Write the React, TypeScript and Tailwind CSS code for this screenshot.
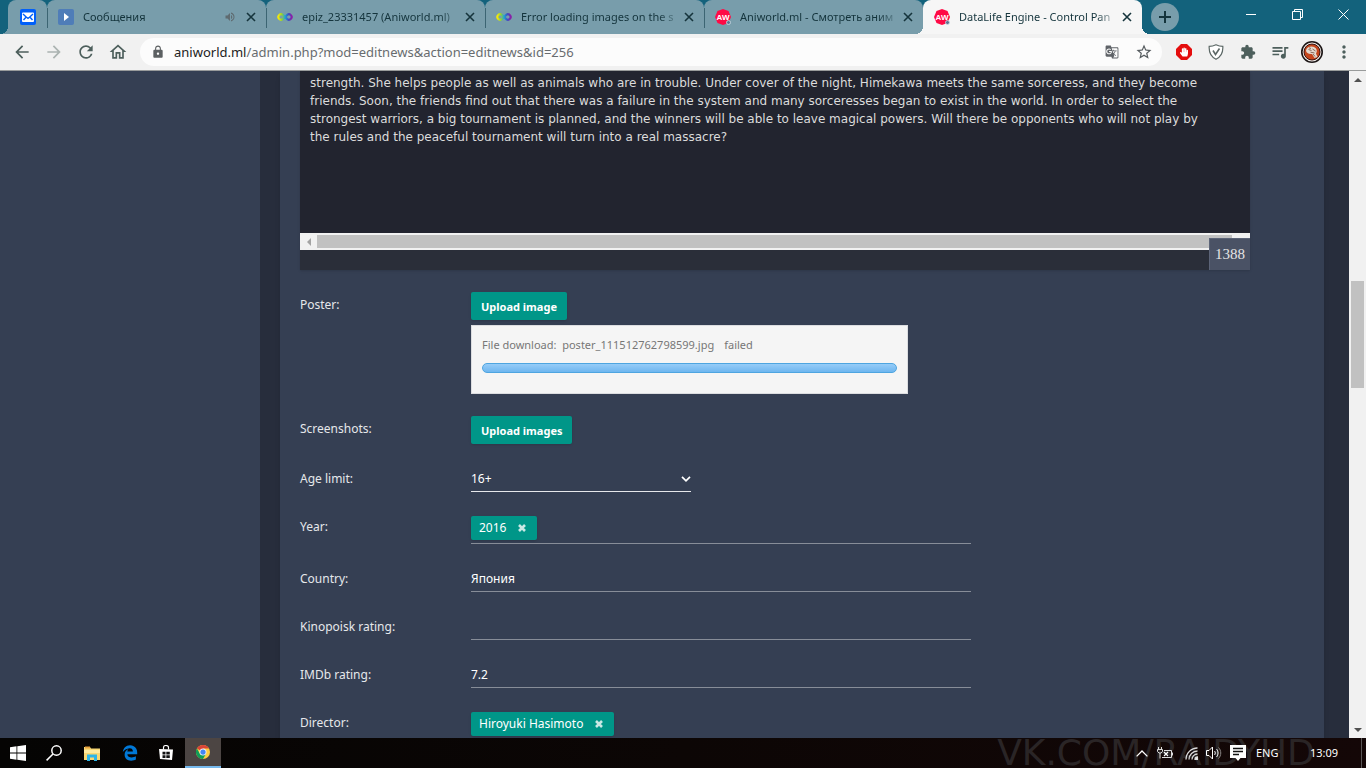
import React, { useState } from 'react';
import {
  MdArrowBack,
  MdArrowForward,
  MdExtension,
  MdGTranslate,
  MdLock,
  MdMoreVert,
  MdOutlineHome,
  MdQueueMusic,
  MdRefresh,
  MdStarBorder,
  MdVolumeUp,
} from 'react-icons/md';
import { FaEdgeLegacy, FaHandPaper } from 'react-icons/fa';

const DESCRIPTION = [
  'strength. She helps people as well as animals who are in trouble. Under cover of the night, Himekawa meets the same sorceress, and they become',
  'friends. Soon, the friends find out that there was a failure in the system and many sorceresses began to exist in the world. In order to select the',
  'strongest warriors, a big tournament is planned, and the winners will be able to leave magical powers. Will there be opponents who will not play by',
  'the rules and the peaceful tournament will turn into a real massacre?',
].join('\n');

/* ---------- logos ---------- */

function MailLogo() {
  return (
    <svg viewBox="0 0 16 16" className="w-4 h-4 shrink-0">
      <rect width="16" height="16" rx="2" fill="#005ff9" />
      <rect x="2" y="3.5" width="12" height="9.5" rx="1" fill="#fff" />
      <path d="M3 5l3.2 3L3.5 11M13 5L9.8 8l2.7 3M5.5 7.5L8 9.3l2.5-1.8" fill="none" stroke="#005ff9" strokeWidth="1.4" />
    </svg>
  );
}

function PlayLogo() {
  return (
    <svg viewBox="0 0 16 16" className="w-4 h-4 shrink-0">
      <rect width="16" height="16" rx="2" fill="#4f7db8" />
      <path d="M6 4l5 4-5 4z" fill="#fff" />
    </svg>
  );
}

function InfinityLogo({ id }: { id: string }) {
  return (
    <svg viewBox="0 0 16 16" className="w-4 h-4 shrink-0">
      <defs>
        <linearGradient id={id} x1="0" x2="1" y1="0" y2="0">
          <stop offset="0" stopColor="#f2e70c" />
          <stop offset="0.25" stopColor="#9bd42a" />
          <stop offset="0.5" stopColor="#1aa6d8" />
          <stop offset="0.75" stopColor="#3a52c4" />
          <stop offset="1" stopColor="#8a1fa8" />
        </linearGradient>
      </defs>
      <path
        d="M8 8l2.2-2.1a2.7 2.7 0 1 1 0 4.2L5.8 5.9a2.7 2.7 0 1 0 0 4.2z"
        fill="none"
        stroke={`url(#${id})`}
        strokeWidth="2.2"
      />
    </svg>
  );
}

function AwLogo() {
  return (
    <svg viewBox="0 0 16 16" className="w-4 h-4 shrink-0">
      <path d="M8 0l5.5 2L16 8l-2.5 6L8 16l-5.5-2L0 8l2.5-6z" fill="#ff0a45" />
      <text x="8" y="10.5" textAnchor="middle" fontSize="8" fontWeight="700" fontFamily="Liberation Sans, sans-serif" fill="#fff">
        AW
      </text>
      <circle cx="13.5" cy="13.5" r="2" fill="#5b7795" stroke="#cfdde4" strokeWidth="0.8" />
    </svg>
  );
}

function ShieldIcon() {
  return (
    <svg viewBox="0 0 16 16" className="w-4 h-4" fill="none" stroke="#5c6866" strokeWidth="1.2">
      <path d="M8 .8c2.5 1.2 4.5 1.6 6.8 1.6.4 5.8-1.6 10.4-6.8 12.9C2.800 12.8.8 8.2 1.2 2.4 3.5 2.4 5.5 2 8 .8z" fill="#fff" />
      <path d="M5 6.5l2.5 4L11.5 4.5" strokeWidth="1.6" />
    </svg>
  );
}

function Avatar() {
  return (
    <svg viewBox="0 0 22 22" className="w-[22px] h-[22px]">
      <circle cx="11" cy="11" r="10.2" fill="#f3efec" stroke="#1c1616" strokeWidth="1.6" />
      <circle cx="11" cy="11" r="8" fill="#c5461d" stroke="#3a1410" />
      <path d="M5 9.5c.5-3.5 5-5 8-3.5 3 1.5 3.5 4.5 2 6.5l1.5 3.5-3 1-2.5-4c-3 .5-6-1-6-3.5z" fill="#e4d9ce" />
      <path d="M7.5 8.5l3 1M11.5 8l3 2M9.5 11.2l4 .8M12 13l2 2.5M8 6.8l2 .7" stroke="#6e4a3c" strokeWidth="0.8" />
    </svg>
  );
}

function ChromeLogo() {
  return (
    <svg viewBox="0 0 16 16" className="w-[14px] h-[14px]">
      <circle cx="8" cy="8" r="8" fill="#ffcd40" />
      <path d="M8 8L1.07 4A8 8 0 0 1 14.93 4H8z" fill="#db4437" />
      <path d="M1.07 4A8 8 0 0 0 8 16l3.46-6L8 8 4.5 10z" fill="#0f9d58" />
      <circle cx="8" cy="8" r="4" fill="#f1f1f1" />
      <circle cx="8" cy="8" r="3" fill="#4285f4" />
    </svg>
  );
}

/* ---------- browser chrome ---------- */

type BrowserTab = { title: string; icon: React.ReactNode; muted?: boolean };

const TABS: BrowserTab[] = [
  { title: 'Сообщения', icon: <PlayLogo />, muted: true },
  { title: 'epiz_23331457 (Aniworld.ml)', icon: <InfinityLogo id="inf-a" /> },
  { title: 'Error loading images on the s', icon: <InfinityLogo id="inf-b" /> },
  { title: 'Aniworld.ml - Смотреть аним', icon: <AwLogo /> },
  { title: 'DataLife Engine - Control Pan', icon: <AwLogo /> },
];

function TabStrip() {
  const [active, setActive] = useState(4);
  return (
    <div className="h-[34px] flex bg-[#13627c] text-[#14343c] pl-2">
      <button aria-label="Mail" className="relative w-[39px] rounded-t-lg bg-[#789dab] flex items-center justify-center">
        <span className="absolute -left-2 bottom-0 w-2 h-2 bg-[radial-gradient(circle_at_top_left,transparent_8px,#789dab_8px)]" />
        <MailLogo />
      </button>
      {TABS.map((t, i) => (
        <div
          key={t.title}
          className={`relative w-[219px] min-w-0 flex items-center pl-[11px] pr-[7px] rounded-t-lg ${
            i === active ? 'bg-[#f6f6f6]' : 'bg-[#789dab]'
          }`}
        >
          {i !== active && <span className="absolute left-0 top-2 h-5 w-px bg-[#3c6573]" />}
          {i === active && (
            <>
              <span className="absolute -left-2 bottom-0 w-2 h-2 bg-[radial-gradient(circle_at_top_left,transparent_8px,#f6f6f6_8px)]" />
              <span className="absolute -right-2 bottom-0 w-2 h-2 bg-[radial-gradient(circle_at_top_right,transparent_8px,#f6f6f6_8px)]" />
            </>
          )}
          {t.icon}
          <button
            onClick={() => setActive(i)}
            className="ml-[9px] flex-1 min-w-0 overflow-hidden whitespace-nowrap text-left text-[11px] leading-4 [mask-image:linear-gradient(to_right,black_86%,transparent)]"
          >
            {t.title}
          </button>
          {t.muted && <MdVolumeUp className="w-3 h-3 mr-[7px] shrink-0 text-[#5f6b70]" />}
          <button aria-label="Close tab" className="w-4 h-4 shrink-0 flex items-center justify-center">
            <svg viewBox="0 0 10 10" className="w-[10px] h-[10px]" stroke="#16343c" strokeWidth="1.6">
              <path d="M1 1l8 8M9 1L1 9" />
            </svg>
          </button>
        </div>
      ))}
      <button aria-label="New tab" className="ml-[9px] mt-[3px] w-7 h-7 rounded-full bg-[#789dab] flex items-center justify-center">
        <svg viewBox="0 0 12 12" className="w-3 h-3" stroke="#14343c" strokeWidth="2">
          <path d="M6 0v12M0 6h12" />
        </svg>
      </button>
      <div className="ml-auto flex h-7">
        <button aria-label="Minimize" className="w-[46px] flex items-center justify-center">
          <span className="w-[10px] h-px bg-white" />
        </button>
        <button aria-label="Restore" className="w-[46px] flex items-center justify-center">
          <svg viewBox="0 0 11 11" className="w-[11px] h-[11px]" fill="none" stroke="#fff">
            <path d="M.5 2.5h8v8h-8zM2.5 2.5v-2h8v8h-2" />
          </svg>
        </button>
        <button aria-label="Close" className="w-[46px] flex items-center justify-center">
          <svg viewBox="0 0 11 11" className="w-[11px] h-[11px]" stroke="#fff">
            <path d="M.5.5l10 10M10.5.5l-10 10" />
          </svg>
        </button>
      </div>
    </div>
  );
}

function ToolbarButton({ label, children }: { label: string; children: React.ReactNode }) {
  return (
    <button aria-label={label} className="w-8 h-7 flex items-center justify-center">
      {children}
    </button>
  );
}

function Toolbar() {
  return (
    <div className="h-[37px] flex items-center bg-[#f1f1f1] border-b border-[#999b9b] text-[#4d5f5c] px-[6px]">
      <div className="flex">
        <ToolbarButton label="Back"><MdArrowBack className="w-5 h-5" /></ToolbarButton>
        <ToolbarButton label="Forward"><MdArrowForward className="w-5 h-5 text-[#abb3b1]" /></ToolbarButton>
        <ToolbarButton label="Reload"><MdRefresh className="w-5 h-5" /></ToolbarButton>
        <ToolbarButton label="Home"><MdOutlineHome className="w-5 h-5" /></ToolbarButton>
      </div>
      <div className="mx-[6px] flex-1 h-7 rounded-full bg-[#fcfcfc] flex items-center pl-[11px] pr-[9px]">
        <MdLock className="w-[14px] h-[14px] text-[#5c6062]" />
        <div className="relative ml-[9px] flex-1">
          <input
            aria-label="Address"
            readOnly
            value="aniworld.ml/admin.php?mod=editnews&action=editnews&id=256"
            className="block w-full bg-transparent text-[13px] leading-5 text-[#686c6f] outline-none"
          />
          {/* host part sits over the field in the darker tone */}
          <span aria-hidden className="absolute left-0 top-0 bg-[#fcfcfc] text-[13px] leading-5 text-[#222] pointer-events-none">
            aniworld.ml
          </span>
        </div>
        <MdGTranslate className="w-[14px] h-[14px] text-[#5f6368]" />
        <MdStarBorder className="ml-4 w-[18px] h-[18px] text-[#555b5e]" />
      </div>
      <div className="flex">
        <ToolbarButton label="AdBlock">
          <span className="relative block w-4 h-4">
            <svg viewBox="0 0 16 16" className="w-4 h-4">
              <path d="M5 0h6l5 5v6l-5 5H5l-5-5V5z" fill="#e40d0d" />
            </svg>
            <FaHandPaper className="absolute left-1 top-[3px] w-2 h-[10px] text-white" />
          </span>
        </ToolbarButton>
        <ToolbarButton label="Protection"><ShieldIcon /></ToolbarButton>
        <ToolbarButton label="Extensions"><MdExtension className="w-4 h-4" /></ToolbarButton>
        <ToolbarButton label="Media"><MdQueueMusic className="w-5 h-5" /></ToolbarButton>
        <ToolbarButton label="Profile"><Avatar /></ToolbarButton>
        <ToolbarButton label="Menu"><MdMoreVert className="w-5 h-5" /></ToolbarButton>
      </div>
    </div>
  );
}

function PageScrollbar() {
  return (
    <div className="w-[17px] shrink-0 bg-[#f1f1f1] flex flex-col items-center">
      <div className="h-[17px] flex items-center">
        <span className="border-x-4 border-b-4 border-x-transparent border-b-[#505050]" />
      </div>
      <div className="flex-1 w-full px-[2px] pt-[193px]">
        <div className="h-[107px] bg-[#c1c1c1]" />
      </div>
      <div className="h-[17px] flex items-center">
        <span className="border-x-4 border-t-4 border-x-transparent border-t-[#505050]" />
      </div>
    </div>
  );
}

/* ---------- form ---------- */

function Row({ label, htmlFor, children }: { label: string; htmlFor: string; children: React.ReactNode }) {
  return (
    <div className="flex items-start">
      <label htmlFor={htmlFor} className="w-[171px] shrink-0 leading-[26px] text-[#e6e8eb]">
        {label}
      </label>
      <div className="flex-1 min-w-0">{children}</div>
    </div>
  );
}

function TextField({ id, value }: { id: string; value?: string }) {
  return (
    <input
      id={id}
      defaultValue={value}
      className="block w-full max-w-[500px] h-[26px] bg-transparent border-b border-[#878d98] text-white outline-none"
    />
  );
}

function TagField({ id, tags }: { id: string; tags: string[] }) {
  const [items, setItems] = useState(tags);
  return (
    <div className="flex w-full max-w-[500px] h-[30px] pt-[2px] border-b border-[#878d98]">
      {items.map((tag) => (
        <span key={tag} className="h-6 flex shrink-0 items-center gap-2 px-2 rounded-xs bg-[#009688] text-white leading-[26px] shadow">
          {tag}
          <button
            type="button"
            aria-label={`Remove ${tag}`}
            onClick={() => setItems(items.filter((x) => x !== tag))}
            className="w-[15px] flex justify-center"
          >
            <svg viewBox="0 0 8 8" className="w-2 h-2" stroke="#c9e8e5" strokeWidth="2.6">
              <path d="M1 1l6 6M7 1L1 7" />
            </svg>
          </button>
        </span>
      ))}
      <input id={id} className="flex-1 min-w-0 bg-transparent outline-none" />
    </div>
  );
}

function UploadButton({ id, children }: { id: string; children: React.ReactNode }) {
  return (
    <button
      id={id}
      type="button"
      className="block h-7 px-[10px] pt-[2px] rounded-xs bg-[#009688] text-white text-[11px] font-bold shadow"
    >
      {children}
    </button>
  );
}

function Editor() {
  return (
    <div className="relative bg-[#2a2e39] shadow">
      <textarea
        aria-label="Description"
        defaultValue={DESCRIPTION}
        className="block w-full h-[162px] px-[10px] pt-[3px] bg-[#22242f] text-[#dcdcdc] text-[12px] leading-[18px] whitespace-pre resize-none overflow-hidden outline-none font-['DejaVu_Sans',sans-serif]"
      />
      <div className="h-[17px] flex items-center bg-[#f1f1f1]">
        <div className="w-[17px] flex justify-center">
          <span className="border-y-4 border-r-4 border-y-transparent border-r-[#a3a3a3]" />
        </div>
        <div className="flex-1 h-[13px] mr-[18px] bg-[#c1c1c1]" />
      </div>
      <div className="h-5" />
      <div className="absolute right-0 bottom-0 h-8 px-[5px] flex items-center bg-[#4a5265] border-l border-t border-[#5c6478] text-[#e4e4e4] text-[15px] font-['Liberation_Serif',serif]">
        1388
      </div>
    </div>
  );
}

function NewsForm() {
  return (
    <form className="w-full max-w-[990px] px-5 flex flex-col gap-[22px] text-[12px]">
      <Editor />
      <Row label="Poster:" htmlFor="poster">
        <UploadButton id="poster">Upload image</UploadButton>
        <div className="mt-[5px] max-w-[437px] h-[69px] px-[10px] pt-[10px] bg-[#f5f5f5] border border-[#dcdde0] text-[#777]">
          <div className="flex gap-[10px] text-[11px] leading-[18px] whitespace-pre">
            <span>File download:  poster_111512762798599.jpg</span>
            <span>failed</span>
          </div>
          <div
            role="progressbar"
            aria-label="Upload progress"
            aria-valuenow={100}
            className="mt-[9px] h-[10px] rounded-full border border-[#4ea5e0] bg-linear-to-b from-[#96ccf8] to-[#6eb6ef]"
          />
        </div>
      </Row>
      <Row label="Screenshots:" htmlFor="screens">
        <UploadButton id="screens">Upload images</UploadButton>
      </Row>
      <Row label="Age limit:" htmlFor="age">
        <div className="relative w-[220px]">
          <select
            id="age"
            defaultValue="16+"
            className="block w-full h-[26px] appearance-none bg-transparent border-b border-[#e6e8eb] text-white outline-none"
          >
            <option>12+</option>
            <option>16+</option>
            <option>18+</option>
          </select>
          <svg viewBox="0 0 10 6" className="absolute right-0 top-[10px] w-[10px] h-[6px] pointer-events-none" fill="none" stroke="#fff" strokeWidth="1.7">
            <path d="M1 .8l4 4 4-4" />
          </svg>
        </div>
      </Row>
      <Row label="Year:" htmlFor="year">
        <TagField id="year" tags={['2016']} />
      </Row>
      <Row label="Country:" htmlFor="country">
        <TextField id="country" value="Япония" />
      </Row>
      <Row label="Kinopoisk rating:" htmlFor="kinopoisk">
        <TextField id="kinopoisk" />
      </Row>
      <Row label="IMDb rating:" htmlFor="imdb">
        <TextField id="imdb" value="7.2" />
      </Row>
      <Row label="Director:" htmlFor="director">
        <TagField id="director" tags={['Hiroyuki Hasimoto']} />
      </Row>
    </form>
  );
}

/* ---------- taskbar ---------- */

function Taskbar() {
  return (
    <footer className="relative h-[30px] shrink-0 flex items-center overflow-hidden bg-linear-to-r from-[#050403] via-[#0c0605] to-[#140707] text-white">
      {/* wallpaper lettering showing through */}
      <span
        aria-hidden
        className="absolute left-[73%] bottom-[-5px] text-[36px] leading-10 text-[#2a2526] whitespace-nowrap font-['DejaVu_Sans',sans-serif]"
      >
        VK.COM/RAIDYHD
      </span>
      <button aria-label="Start" className="w-9 flex justify-center">
        <svg viewBox="0 0 16 16" className="w-4 h-4" fill="#fff">
          <path d="M0 2.2l6.5-.9v6.200H0zM7.300 1.200L16 0v7.500H7.300zM0 8.400h6.500v6.300L0 13.800zM7.300 8.400H16V16l-8.700-1.200z" />
        </svg>
      </button>
      <button aria-label="Search" className="w-9 flex justify-center">
        <svg viewBox="0 0 16 16" className="w-4 h-4" fill="none" stroke="#fff" strokeWidth="1.5">
          <circle cx="10.5" cy="5.5" r="4.7" />
          <path d="M7 9L.6 15.4" />
        </svg>
      </button>
      <button aria-label="Files" className="w-10 flex justify-center">
        <svg viewBox="0 0 16 15" className="w-4 h-[15px]">
          <path d="M0 1h6l1 1.5h9V14H0z" fill="#f7d774" />
          <path d="M1 .5h5v2H1z" fill="#e8a33d" />
          <path d="M0 4h16v3H0z" fill="#fdeaa0" />
          <path d="M3 15V8.5h10V15h-3v-3.5H6V15z" fill="#2cb5e9" />
        </svg>
      </button>
      <button aria-label="Edge" className="w-[35px] flex justify-center">
        <FaEdgeLegacy className="w-4 h-4 text-[#0078d7]" />
      </button>
      <button aria-label="Store" className="w-[38px] flex justify-center">
        <svg viewBox="0 0 16 16" className="w-4 h-4">
          <path d="M5.5 4.5V2.500a2.5 2 0 0 1 5 0v2" fill="none" stroke="#fff" strokeWidth="1.2" />
          <path d="M1 4l14 .5-1 10.5L2 14z" fill="#fff" />
          <path d="M4.5 6.700h3v2.8h-3zM8.300 6.700h3.500v2.800H8.300zM4.500 10.200h3V13h-3zM8.300 10.200h3.500V13H8.300z" fill="#111" />
        </svg>
      </button>
      <button aria-label="Chrome" className="w-9 h-full flex items-center justify-center bg-[#4c4543] border-b-2 border-[#76b9ed]">
        <ChromeLogo />
      </button>
      <div className="relative ml-auto flex items-center text-[11px]">
        <svg viewBox="0 0 12 7" className="w-3 h-[7px]" fill="none" stroke="#fff" strokeWidth="1.3">
          <path d="M.6 6.4L6 1l5.400 5.400" />
        </svg>
        <svg viewBox="0 0 16 12" className="ml-[9px] w-4 h-3" fill="none" stroke="#ddd">
          <path d="M1.5 0v2M4.5 0v2M.5 2.500h5v2l-1.500 1.500h-2L.5 4.500zM3 6v5.500M5 10.500h9.500v-7H7" />
          <path d="M15.5 5.500v3" />
          <path d="M7 5l4 4M11 5L7 9" stroke="#fff" strokeWidth="1.3" />
        </svg>
        <svg viewBox="0 0 13 13" className="ml-3 w-[13px] h-[13px]" fill="none" stroke="#ddd" strokeWidth="1.3">
          <path d="M1 12.500A11.500 11.500 0 0 1 12.500 1" />
          <path d="M4 12.500A8.500 8.500 0 0 1 12.500 4M7 12.500A5.500 5.500 0 0 1 12.500 7" />
          <path d="M10 12.500A2.500 2.500 0 0 1 12.500 10v2.500z" fill="#fff" />
        </svg>
        <svg viewBox="0 0 16 14" className="ml-2 w-4 h-[14px]" fill="none" stroke="#fff">
          <path d="M.5 4.500h2.500l3.500-3.500v12L3 9.500H.5z" />
          <path d="M8.500 5c1 1 1 3 0 4M10.500 3c2 2.200 2 5.800 0 8" />
          <path d="M12.500 1.500c3 3 3 8 0 11" stroke="#8a8585" />
        </svg>
        <svg viewBox="0 0 16 16" className="ml-2 w-4 h-4">
          <path d="M0 0h16v13h-5.500L8 16l-2.500-3H0z" fill="#fff" />
          <path d="M3 3.500h10M3 6.500h10M3 9.500h6" stroke="#111" strokeWidth="1.3" />
        </svg>
        <span className="ml-[10px] w-6">ENG</span>
        <time className="ml-[30px] w-7">13:09</time>
        <span className="ml-[23px] mr-1 w-px h-[30px] bg-[#5a5656]" />
      </div>
    </footer>
  );
}

function App() {
  return (
    <div className="h-screen flex flex-col overflow-hidden bg-[#353f53] font-['Noto_Sans',sans-serif]">
      <header className="shrink-0">
        <TabStrip />
        <Toolbar />
      </header>
      <div className="flex-1 min-h-0 flex">
        <aside className="w-[260px] shrink-0" />
        <main className="flex-1 min-w-0 overflow-hidden bg-[#272d3c] pl-5 pr-[25px]">
          <div className="min-h-full bg-[#353f53] shadow-md">
            <NewsForm />
          </div>
        </main>
        <PageScrollbar />
      </div>
      <Taskbar />
    </div>
  );
}

export default App;
